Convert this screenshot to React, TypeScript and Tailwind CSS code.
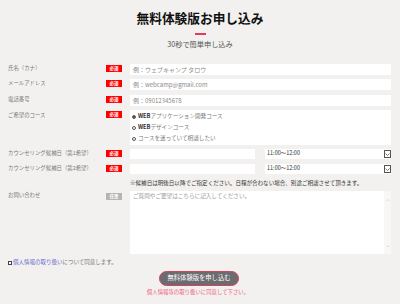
import React from 'react';

const Badge: React.FC<{ optional?: boolean }> = ({ optional }) => (
    <span
        className={`w-[16px] h-[7px] flex items-center justify-center text-[4.5px] leading-none font-bold text-white shrink-0 ${
            optional ? 'bg-[#b4b4b4]' : 'bg-[#ff0000]'
        }`}
    >
        {optional ? '任意' : '必須'}
    </span>
);

const Chevron: React.FC<{ up?: boolean; className?: string }> = ({ up, className }) => (
    <svg viewBox="0 0 10 6" className={className} fill="none" stroke="currentColor" strokeWidth="1.4">
        {up ? <polyline points="1,5 5,1 9,5" /> : <polyline points="1,1 5,5 9,1" />}
    </svg>
);

const TimeSelect: React.FC = () => (
    <div className="w-[126px] h-[10px] bg-white flex items-center justify-between pl-[2px]">
        <span className="text-[5.5px] leading-none text-[#333]">11:00～12:00</span>
        <span className="w-[7px] h-[8px] border border-[#555] flex items-center justify-center text-[#444] bg-white">
            <Chevron className="w-[5px] h-[3px]" />
        </span>
    </div>
);

const inputClasses = "flex-1 h-[11px] bg-white flex items-center pl-[3px] text-[6px] leading-none text-[#8a8a8a]";
const labelClasses = "w-[98px] shrink-0 text-[5.4px] leading-[8px] text-[#7a7a7a]";

export default function App() {
    return (
        <div className="w-[400px] h-[304px] bg-[#f2f1ef] overflow-hidden font-['Noto_Sans_CJK_JP','Noto_Sans',sans-serif]">
            <div className="pt-[9px]">
                <h1 className="text-center text-[12.7px] leading-[18px] font-bold text-[#111]">無料体験版お申し込み</h1>
                <div className="mx-auto mt-[6px] w-[11px] h-[2px] bg-[#e23b5b]" />
                <p className="mt-[5px] text-center text-[7.2px] leading-[8px] text-[#555]">30秒で簡単申し込み</p>
            </div>

            <form className="mt-[16px] pl-[8px] pr-[9px]">
                <div className="flex items-start">
                    <label className={`${labelClasses} mt-[0px]`}>氏名（カナ）</label>
                    <div className="mt-[1px] mr-[8px]"><Badge /></div>
                    <div className={inputClasses}>例：ウェブキャンプ タロウ</div>
                </div>
                <div className="flex items-start mt-[4px]">
                    <label className={labelClasses}>メールアドレス</label>
                    <div className="mt-[1px] mr-[8px]"><Badge /></div>
                    <div className={inputClasses}>例：webcamp@gmail.com</div>
                </div>
                <div className="flex items-start mt-[5px]">
                    <label className={labelClasses}>電話番号</label>
                    <div className="mt-[1px] mr-[8px]"><Badge /></div>
                    <div className={inputClasses}>例：09012345678</div>
                </div>

                <div className="flex items-start mt-[4px]">
                    <label className={`${labelClasses} mt-[1px]`}>ご希望のコース</label>
                    <div className="mt-[1px] mr-[8px]"><Badge /></div>
                    <div className="flex-1 h-[35px] bg-white pt-[1px] pl-[2px] text-[5.6px] leading-[11px] text-[#7a7a7a]">
                        {[
                            { label: 'アプリケーション開発コース', web: true, checked: true },
                            { label: 'デザインコース', web: true, checked: false },
                            { label: 'コースを迷っていて相談したい', web: false, checked: false },
                        ].map((c, i) => (
                            <div key={i} className="flex items-center gap-[2px]">
                                <span className="w-[4px] h-[4px] rounded-full border border-[#555] flex items-center justify-center">
                                    {c.checked && <span className="w-[2px] h-[2px] rounded-full bg-[#333]" />}
                                </span>
                                <span>
                                    {c.web && <span className="font-semibold text-[#333]">WEB</span>}
                                    {c.label}
                                </span>
                            </div>
                        ))}
                    </div>
                </div>

                <div className="flex items-start mt-[4px]">
                    <label className={labelClasses}>カウンセリング候補日（第1希望）</label>
                    <div className="mt-[1px] mr-[8px]"><Badge /></div>
                    <div className="flex-1 flex justify-between">
                        <div className="w-[125px] h-[10px] bg-white" />
                        <TimeSelect />
                    </div>
                </div>
                <div className="flex items-start mt-[5px]">
                    <label className={labelClasses}>カウンセリング候補日（第2希望）</label>
                    <div className="mt-[1px] mr-[8px]"><Badge /></div>
                    <div className="flex-1 flex justify-between">
                        <div className="w-[125px] h-[10px] bg-white" />
                        <TimeSelect />
                    </div>
                </div>
                <p className="mt-[4px] ml-[122px] text-[5.55px] leading-[10px] text-[#333]">
                    ※候補日は明後日以降でご指定ください。日程が合わない場合、別途ご相談させて頂きます。
                </p>

                <div className="flex items-start mt-[3px]">
                    <label className={labelClasses}>お問い合わせ</label>
                    <div className="mt-[2px] mr-[8px]"><Badge optional /></div>
                    <div className="flex-1 h-[63px] bg-white flex">
                        <div className="flex-1 pl-[3px] pt-[3px] text-[5.6px] leading-none text-[#9a9a9a]">
                            ご質問やご要望はこちらに記入してください。
                        </div>
                        <div className="w-[7px] bg-[#f7f7f7] flex flex-col items-center justify-between pt-[8px] pb-[7px] text-[#c4c4c4]">
                            <Chevron up className="w-[4px] h-[2.5px]" />
                            <Chevron className="w-[4px] h-[2.5px]" />
                        </div>
                    </div>
                </div>

                <div className="flex items-center mt-[4px] h-[10px] gap-[1px]">
                    <span className="w-[4px] h-[4px] border border-[#444] bg-white" />
                    <span className="text-[5.5px] leading-none text-[#777]">
                        <span className="text-[#6b6bd0]">個人情報の取り扱い</span>について同意します。
                    </span>
                </div>
            </form>

            <div className="mt-[3px] flex flex-col items-center">
                <button
                    type="button"
                    className="w-[80px] h-[15px] rounded-full bg-[#6b6b70] border border-[#d2435f] text-white text-[6.3px] leading-none -translate-x-[1px]"
                >
                    無料体験版を申し込む
                </button>
                <p className="mt-[2px] text-[5.4px] leading-[8px] text-[#f0607f] -translate-x-[2px]">個人情報等の取り扱いに同意して下さい。</p>
            </div>
        </div>
    );
}
